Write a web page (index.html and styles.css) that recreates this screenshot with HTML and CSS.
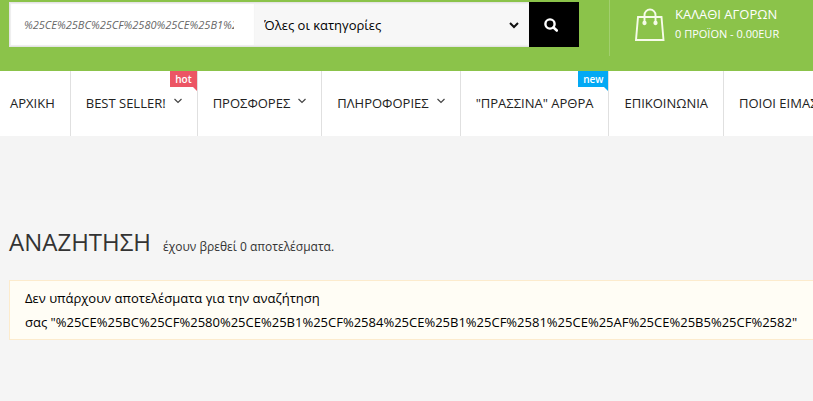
FILE: index.html
```html
<!DOCTYPE html>
<html lang="el">
<head>
<meta charset="utf-8">
<meta name="viewport" content="width=device-width, initial-scale=1">
<title>Αναζήτηση</title>
<link rel="stylesheet" href="styles.css">
</head>
<body>
<header class="header">
  <form class="search">
    <div class="search-text">
      <input class="search-input" type="text" aria-label="Αναζήτηση" value="%25CE%25BC%25CF%2580%25CE%25B1%25CF%2584%25CE%25B1%25CF%2581%25CE%25AF%25CE%25B5%25CF%2582">
    </div>
    <div class="search-category">
      <select class="search-select" aria-label="Κατηγορία">
        <option>Όλες οι κατηγορίες</option>
      </select>
      <svg class="select-arrow" width="10" height="7" viewBox="0 0 10 7"><path d="M1 1l4 4 4-4" fill="none" stroke="#111" stroke-width="2"/></svg>
    </div>
    <button class="search-button" type="button" aria-label="Αναζήτηση">
      <svg width="14" height="14" viewBox="0 0 14 14"><circle cx="6" cy="6" r="4.6" fill="none" stroke="#fff" stroke-width="2.4"/><path d="M9.5 9.5l3.3 3" fill="none" stroke="#fff" stroke-width="2.6" stroke-linecap="round"/></svg>
    </button>
  </form>
  <a class="cart" href="#">
    <svg class="cart-icon" width="30" height="33" viewBox="0 0 30 33" fill="none" stroke="#f6fbe9" stroke-width="1.900"><path d="M3 9h23.500L28.500 32h-27.500z"/><path d="M9.500 14.500V7a5.500 5.500 0 0 1 11 0v7.500"/><circle cx="9.500" cy="15" r="1.400" fill="#f6fbe9" stroke-width="1.500"/><circle cx="20.500" cy="15" r="1.400" fill="#f6fbe9" stroke-width="1.500"/></svg>
    <span class="cart-text">
      <span class="cart-title">ΚΑΛΑΘΙ ΑΓΟΡΩΝ</span>
      <span class="cart-total">0 ΠΡΟΪΟΝ - 0.00EUR</span>
    </span>
  </a>
</header>
<nav class="nav">
  <a class="nav-item" href="#">ΑΡΧΙΚΗ</a>
  <a class="nav-item" href="#">BEST SELLER!<svg class="caret" width="8" height="6" viewBox="0 0 8 6"><path d="M.5 1L4 4.500 7.500 1"/></svg><span class="badge hot">hot</span></a>
  <a class="nav-item" href="#">ΠΡΟΣΦΟΡΕΣ<svg class="caret" width="8" height="6" viewBox="0 0 8 6"><path d="M.5 1L4 4.500 7.500 1"/></svg></a>
  <a class="nav-item" href="#">ΠΛΗΡΟΦΟΡΙΕΣ<svg class="caret" width="8" height="6" viewBox="0 0 8 6"><path d="M.5 1L4 4.500 7.500 1"/></svg></a>
  <a class="nav-item" href="#">"ΠΡΑΣΣΙΝΑ" ΑΡΘΡΑ<span class="badge new">new</span></a>
  <a class="nav-item" href="#">ΕΠΙΚΟΙΝΩΝΙΑ</a>
  <a class="nav-item" href="#">ΠΟΙΟΙ ΕΙΜΑΣΤΕ</a>
</nav>
<div class="breadcrumb"></div>
<main class="content">
  <div class="heading">
    <h1 class="title">ΑΝΑΖΗΤΗΣΗ</h1>
    <span class="count">έχουν βρεθεί 0 αποτελέσματα.</span>
  </div>
  <p class="notice">Δεν υπάρχουν αποτελέσματα για την αναζήτηση<br>σας "%25CE%25BC%25CF%2580%25CE%25B1%25CF%2584%25CE%25B1%25CF%2581%25CE%25AF%25CE%25B5%25CF%2582"</p>
</main>
</body>
</html>
```
FILE: styles.css
```css
* {
  box-sizing: border-box;
}

body {
  margin: 0;
  overflow-x: hidden;
  background: #f5f5f5;
  color: #000;
  font-family: "Open Sans", "Noto Sans", sans-serif;
  font-size: 13px;
  line-height: 24px;
}

a {
  color: inherit;
  text-decoration: none;
}

.header {
  display: flex;
  align-items: flex-start;
  gap: 30px;
  padding: 0 15px 15px 9px;
  background: #8bc34a;
}

.search {
  display: flex;
  flex: 0 1 570px;
  height: 45px;
  margin-top: 2px;
}

.search-text {
  display: flex;
  flex: 0 0 43%;
  padding: 0 20px 0 14px;
  background: #fff;
  border: 1px solid #e4e4e4;
  border-width: 1px 0 1px 1px;
  box-shadow: inset 1px 1px 1px #eee, inset 0 -1px 1px #eee;
}

.search-input {
  width: 100%;
  padding: 0;
  border: 0;
  background: transparent;
  color: #666;
  font: italic 11px "Open Sans", sans-serif;
}

.search-category {
  position: relative;
  flex: 1;
  border: 1px solid #e4e4e4;
  border-width: 1px 0;
  background: #f7f7f7;
  box-shadow: inset 0 1px 1px #eee, inset 0 -1px 1px #eee;
}

.search-select {
  appearance: none;
  width: 100%;
  height: 100%;
  padding: 0 25px 0 10px;
  border: 0;
  background: transparent;
  color: #000;
  font: 13px "Open Sans", sans-serif;
}

.select-arrow {
  position: absolute;
  top: 19px;
  right: 10px;
  pointer-events: none;
}

.search-button {
  display: flex;
  flex: 0 0 50px;
  align-items: center;
  justify-content: center;
  padding: 0 6px 0 0;
  border: 0;
  background: #000;
}

.cart {
  display: flex;
  flex: none;
  gap: 10px;
  height: 56px;
  padding: 5px 0 0 25px;
  border-left: 1px solid #a2cf6e;
  color: #fff;
}

.cart-icon {
  margin-top: 3px;
}

.cart-text {
  display: flex;
  flex-direction: column;
  line-height: 19px;
}

.cart-total {
  font-size: 11px;
  font-weight: 500;
}

.nav {
  display: flex;
  height: 65px;
  background: #fff;
  color: #222;
  line-height: 65px;
  white-space: nowrap;
}

.nav-item {
  position: relative;
  display: flex;
  flex: none;
  align-items: center;
  padding: 0 15px;
  border-right: 1px solid #e0e0e0;
}

.nav-item:first-child {
  padding-left: 10px;
}

.caret {
  margin: 0 0 6px 8px;
  fill: none;
  stroke: #444;
  stroke-width: 1.2;
}

.badge {
  position: absolute;
  top: 0;
  right: 0;
  height: 16px;
  padding: 0 5px;
  color: #fff;
  font-size: 10px;
  font-weight: 600;
  line-height: 16px;
}

.badge::after {
  content: "";
  position: absolute;
  top: 100%;
  right: 0;
  border-top: 4px solid;
  border-left: 4px solid transparent;
}

.hot {
  background: #ec5564;
}

.new {
  background: #03a9f4;
}

.hot::after {
  border-top-color: #ec5564;
}

.new::after {
  border-top-color: #03a9f4;
}

.breadcrumb {
  height: 64px;
  background: #f4f4f4;
}

.content {
  padding: 25px 0 24px 9px;
}

.heading {
  display: flex;
  align-items: baseline;
  gap: 12px;
  line-height: 33px;
}

.title {
  margin: 0;
  color: #333;
  font-size: 24px;
  font-weight: 400;
}

.count {
  color: #333;
  font-size: 12px;
}

.notice {
  margin: 17px 0 0;
  padding: 5px 15px;
  border: 1px solid #fcebcd;
  border-right: 0;
  background: #fffdf5;
}
```
